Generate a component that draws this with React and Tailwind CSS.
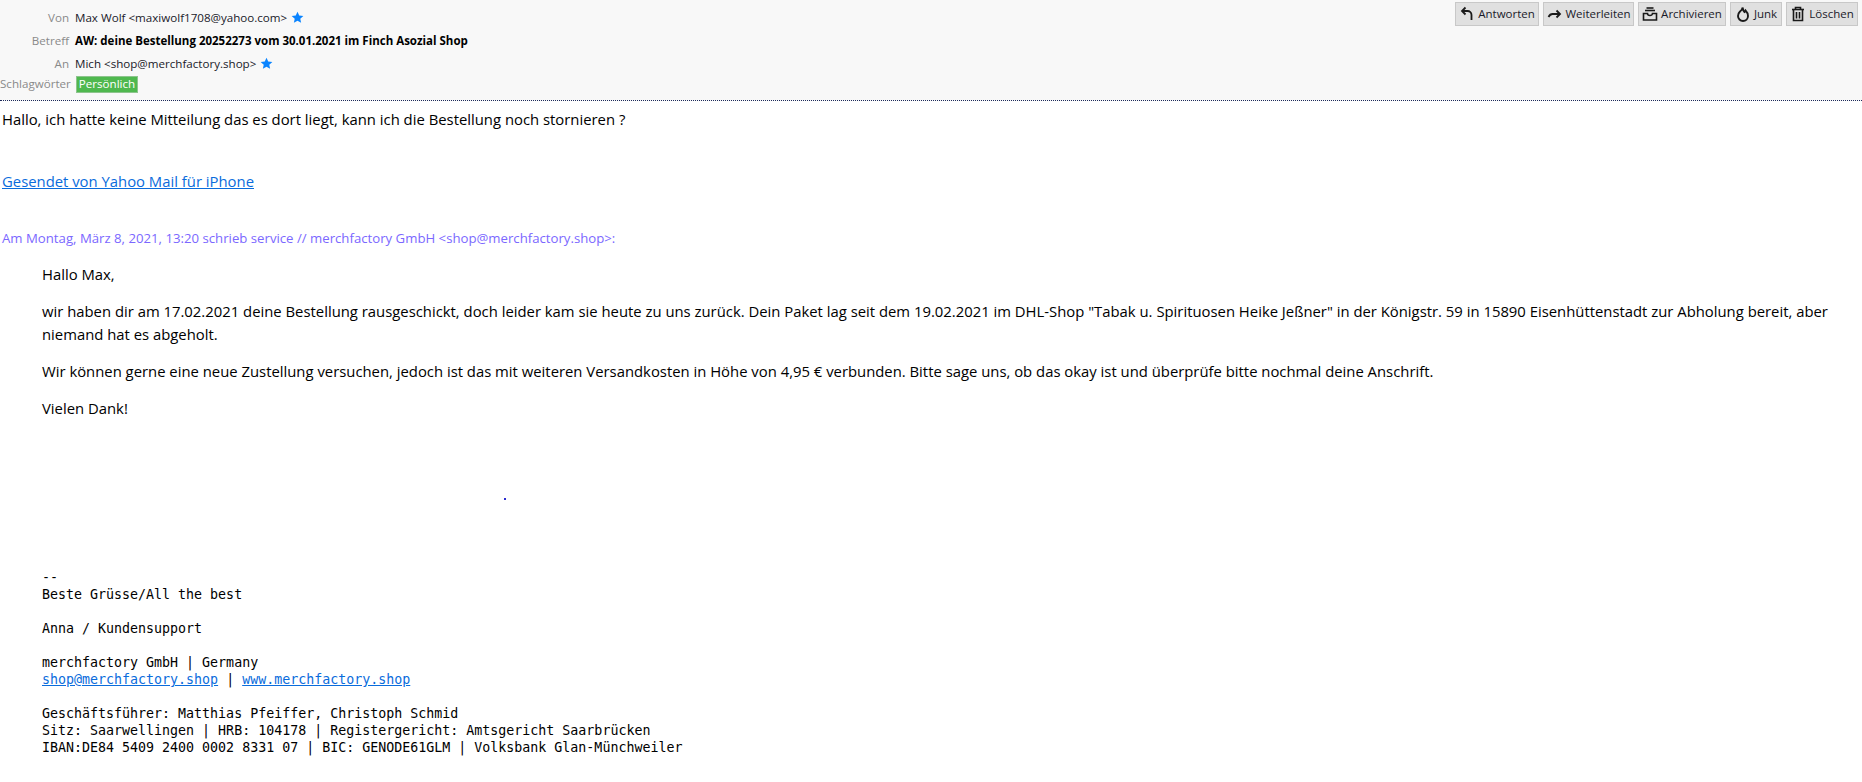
const sans = "font-['Open_Sans','Noto_Sans',sans-serif]"

function Star() {
    return (
        <svg viewBox="0 0 24 24" className="w-[13px] h-[13px] ml-[4px]" fill="#0a84ff">
            <path d="M12 1.500l3.200 7 7.600.8-5.700 5.100 1.600 7.500L12 18.100l-6.700 3.800 1.600-7.500L1.200 9.300l7.600-.8z" />
        </svg>
    )
}

function ReplyIcon() {
    return (
        <svg viewBox="0 0 16 16" className="w-4 h-4" fill="none" stroke="#1a1a1a" strokeWidth="1.8">
            <path d="M6.500 1.500L3 5l3.500 3.500" />
            <path d="M3.500 5h5a4 4 0 0 1 4 4v5" />
        </svg>
    )
}

function ForwardIcon() {
    return (
        <svg viewBox="0 0 16 16" className="w-4 h-4" fill="none" stroke="#1a1a1a" strokeWidth="1.8">
            <path d="M10.500 4.500L14 8l-3.500 3.500" />
            <path d="M13.500 8H6.500C4.500 8 3.500 9 2.500 11" />
        </svg>
    )
}

function ArchiveIcon() {
    return (
        <svg viewBox="0 0 16 16" className="w-4 h-4" fill="none" stroke="#1a1a1a" strokeWidth="1.600">
            <path d="M4.500 2h7" />
            <path d="M3 4.500h10" />
            <path d="M1.500 7.500h4a2.500 2 0 0 0 5 0h4v6.500h-13z" />
        </svg>
    )
}

function JunkIcon() {
    return (
        <svg viewBox="0 0 16 16" className="w-4 h-4" fill="none" stroke="#1a1a1a" strokeWidth="1.900">
            <path d="M7.500 1.500c.5 2.500 1 3.500 2 4.500.5-.5.8-1 1-1.500 1.500 1.500 2.500 3.500 2.500 5.500a5 5 0 0 1-10 0c0-2 1-3.500 2-4.500 1.500-1 2.500-2.500 2.500-4z" />
        </svg>
    )
}

function TrashIcon() {
    return (
        <svg viewBox="0 0 16 16" className="w-4 h-4" fill="none" stroke="#1a1a1a" strokeWidth="1.600">
            <path d="M2 3.500h12" />
            <path d="M5.500 3V1.500h5V3" />
            <path d="M3.500 4v10.500h9V4" />
            <path d="M6.500 6v6.500M9.500 6v6.500" />
        </svg>
    )
}

const buttons = [
    { label: "Antworten", width: "w-[84px]", icon: <ReplyIcon /> },
    { label: "Weiterleiten", width: "w-[91px]", icon: <ForwardIcon /> },
    { label: "Archivieren", width: "w-[88px]", icon: <ArchiveIcon /> },
    { label: "Junk", width: "w-[52px]", icon: <JunkIcon /> },
    { label: "Löschen", width: "w-[72px]", icon: <TrashIcon /> },
]

function HeaderRow({ label, className = "", children }) {
    return (
        <div className={`flex items-center ${className}`}>
            <span className="w-[69px] shrink-0 text-right text-[#8a8a8a] whitespace-nowrap">{label}</span>
            <div className="ml-[6px] flex items-center text-[#1a1a2a]">{children}</div>
        </div>
    )
}

function Header() {
    return (
        <header className="relative h-[101px] bg-[#f8f8f8] border-b border-dotted border-[#1d2a5a] text-[11.600px]">
            <div className="flex flex-col pt-[6px]">
                <HeaderRow label="Von" className="h-[23px]">
                    Max Wolf &lt;maxiwolf1708@yahoo.com&gt;
                    <Star />
                </HeaderRow>
                <HeaderRow label="Betreff" className="h-[24px]">
                    <b className="text-black text-[11.500px]">AW: deine Bestellung 20252273 vom 30.01.2021 im Finch Asozial Shop</b>
                </HeaderRow>
                <HeaderRow label="An" className="h-[21px]">
                    Mich &lt;shop@merchfactory.shop&gt;
                    <Star />
                </HeaderRow>
                <HeaderRow label="Schlagwörter" className="h-[20px]">
                    <span className="ml-px h-[17px] w-[62px] flex items-center justify-center bg-[#4fb84f] border border-[#8dc48d] text-white">Persönlich</span>
                </HeaderRow>
            </div>
            <div className="absolute top-[2px] right-[4px] flex gap-1">
                {buttons.map((b) => (
                    <button
                        key={b.label}
                        className={`${b.width} h-6 flex items-center justify-center gap-[3px] bg-[#e0e0e0] border border-[#c8c8c8] text-[11.500px] text-[#1a1a2a]`}
                    >
                        {b.icon}
                        {b.label}
                    </button>
                ))}
            </div>
        </header>
    )
}

function Signature() {
    return (
        <pre className="mt-[69px] font-['DejaVu_Sans_Mono',monospace] text-[13.300px] leading-[17px] text-black">
            {"--\nBeste Grüsse/All the best\n\nAnna / Kundensupport\n\nmerchfactory GmbH | Germany\n"}
            <a className="text-[#0a6cdc] underline">shop@merchfactory.shop</a>
            {" | "}
            <a className="text-[#0a6cdc] underline">www.merchfactory.shop</a>
            {"\n\nGeschäftsführer: Matthias Pfeiffer, Christoph Schmid\nSitz: Saarwellingen | HRB: 104178 | Registergericht: Amtsgericht Saarbrücken\nIBAN:DE84 5409 2400 0002 8331 07 | BIC: GENODE61GLM | Volksbank Glan-Münchweiler"}
        </pre>
    )
}

export default function App() {
    return (
        <div className={`h-[782px] overflow-hidden bg-white text-black ${sans}`}>
            <Header />
            <main className="px-[2px] text-[14.850px] leading-[23px]">
                <p className="mt-[7px]">Hallo, ich hatte keine Mitteilung das es dort liegt, kann ich die Bestellung noch stornieren ?</p>
                <p className="mt-[39px]">
                    <a className="text-[#0a6cdc] underline">Gesendet von Yahoo Mail für iPhone</a>
                </p>
                <p className="mt-[34px] text-[13.200px] text-[#7b68ff]">
                    Am Montag, März 8, 2021, 13:20 schrieb service // merchfactory GmbH &lt;shop@merchfactory.shop&gt;:
                </p>
                <div className="pl-[40px] pr-[20px] mt-[13px]">
                    <p>Hallo Max,</p>
                    <p className="mt-[14px]">
                        wir haben dir am 17.02.2021 deine Bestellung rausgeschickt, doch leider kam sie heute zu uns zurück. Dein Paket lag seit dem 19.02.2021 im DHL-Shop "Tabak u. Spirituosen Heike Jeßner" in der Königstr. 59 in 15890 Eisenhüttenstadt zur Abholung bereit, aber niemand hat es abgeholt.
                    </p>
                    <p className="mt-[14px]">
                        Wir können gerne eine neue Zustellung versuchen, jedoch ist das mit weiteren Versandkosten in Höhe von 4,95 € verbunden. Bitte sage uns, ob das okay ist und überprüfe bitte nochmal deine Anschrift.
                    </p>
                    <p className="mt-[14px]">Vielen Dank!</p>
                    <div className="mt-[78px] ml-[462px] w-[2px] h-[2px] bg-[#2b2bd0]" />
                    <Signature />
                </div>
            </main>
        </div>
    )
}
